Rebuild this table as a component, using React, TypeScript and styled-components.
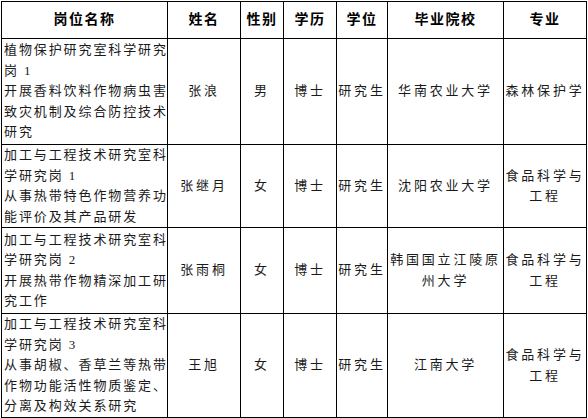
import React from 'react';
import styled, { createGlobalStyle } from 'styled-components';

const GlobalStyle = createGlobalStyle`
  html, body {
    margin: 0;
    padding: 0;
    background: #fff;
  }
  body {
    font-family: "Liberation Serif", "Noto Sans CJK SC", serif;
    color: #000;
  }
`;

interface Row {
  post: string[];
  name: string;
  sex: string;
  edu: string;
  degree: string;
  school: string[];
  major: string[];
  height: number;
}

const rows: Row[] = [
  {
    post: ['植物保护研究室科学研究', '岗 1', '开展香料饮料作物病虫害', '致灾机制及综合防控技术', '研究'],
    name: '张浪',
    sex: '男',
    edu: '博士',
    degree: '研究生',
    school: ['华南农业大学'],
    major: ['森林保护学'],
    height: 106,
  },
  {
    post: ['加工与工程技术研究室科', '学研究岗 1', '从事热带特色作物营养功', '能评价及其产品研发'],
    name: '张继月',
    sex: '女',
    edu: '博士',
    degree: '研究生',
    school: ['沈阳农业大学'],
    major: ['食品科学与', '工程'],
    height: 82,
  },
  {
    post: ['加工与工程技术研究室科', '学研究岗 2', '开展热带作物精深加工研', '究工作'],
    name: '张雨桐',
    sex: '女',
    edu: '博士',
    degree: '研究生',
    school: ['韩国国立江陵原', '州大学'],
    major: ['食品科学与', '工程'],
    height: 86,
  },
  {
    post: ['加工与工程技术研究室科', '学研究岗 3', '从事胡椒、香草兰等热带', '作物功能活性物质鉴定、', '分离及构效关系研究'],
    name: '王旭',
    sex: '女',
    edu: '博士',
    degree: '研究生',
    school: ['江南大学'],
    major: ['食品科学与', '工程'],
    height: 104,
  },
];

const widths = [166, 73, 43, 53, 51, 116, 83];

const Page = styled.div`
  padding: 1px 0 0 1px;
`;

const Table = styled.table`
  border-collapse: collapse;
  table-layout: fixed;
  width: 585px;
`;

const HeadCell = styled.th`
  height: 36px;
  padding: 0;
  border: 1px solid #000;
  font-size: 14px;
  font-weight: 700;
  letter-spacing: 1.5px;
  text-align: center;
  vertical-align: middle;
  line-height: 20px;
`;

const BodyRow = styled.tr<{ $h: number }>`
  height: ${(p) => p.$h}px;
`;

const Cell = styled.td<{ $left?: boolean }>`
  padding: ${(p) => (p.$left ? '0 0 0 2px' : '0')};
  border: 1px solid #000;
  font-size: 13px;
  line-height: 20.5px;
  letter-spacing: ${(p) => (p.$left ? '1.9px' : '2.8px')};
  text-align: ${(p) => (p.$left ? 'left' : 'center')};
  vertical-align: middle;
  white-space: nowrap;
  overflow: hidden;
  color: #1a1a1a;
`;

const Line = styled.span`
  display: block;
`;

const Lines = ({ items }: { items: string[] }) => (
  <>
    {items.map((t, i) => (
      <Line key={i}>{t}</Line>
    ))}
  </>
);

const App = () => {
  return (
    <Page>
      <GlobalStyle />
      <Table>
        <colgroup>
          {widths.map((w, i) => (
            <col key={i} style={{ width: w }} />
          ))}
        </colgroup>
        <thead>
          <tr>
            <HeadCell>岗位名称</HeadCell>
            <HeadCell>姓名</HeadCell>
            <HeadCell>性别</HeadCell>
            <HeadCell>学历</HeadCell>
            <HeadCell>学位</HeadCell>
            <HeadCell>毕业院校</HeadCell>
            <HeadCell>专业</HeadCell>
          </tr>
        </thead>
        <tbody>
          {rows.map((r) => (
            <BodyRow key={r.name} $h={r.height}>
              <Cell $left>
                <Lines items={r.post} />
              </Cell>
              <Cell>{r.name}</Cell>
              <Cell>{r.sex}</Cell>
              <Cell>{r.edu}</Cell>
              <Cell>{r.degree}</Cell>
              <Cell>
                <Lines items={r.school} />
              </Cell>
              <Cell>
                <Lines items={r.major} />
              </Cell>
            </BodyRow>
          ))}
        </tbody>
      </Table>
    </Page>
  );
};

export default App;
